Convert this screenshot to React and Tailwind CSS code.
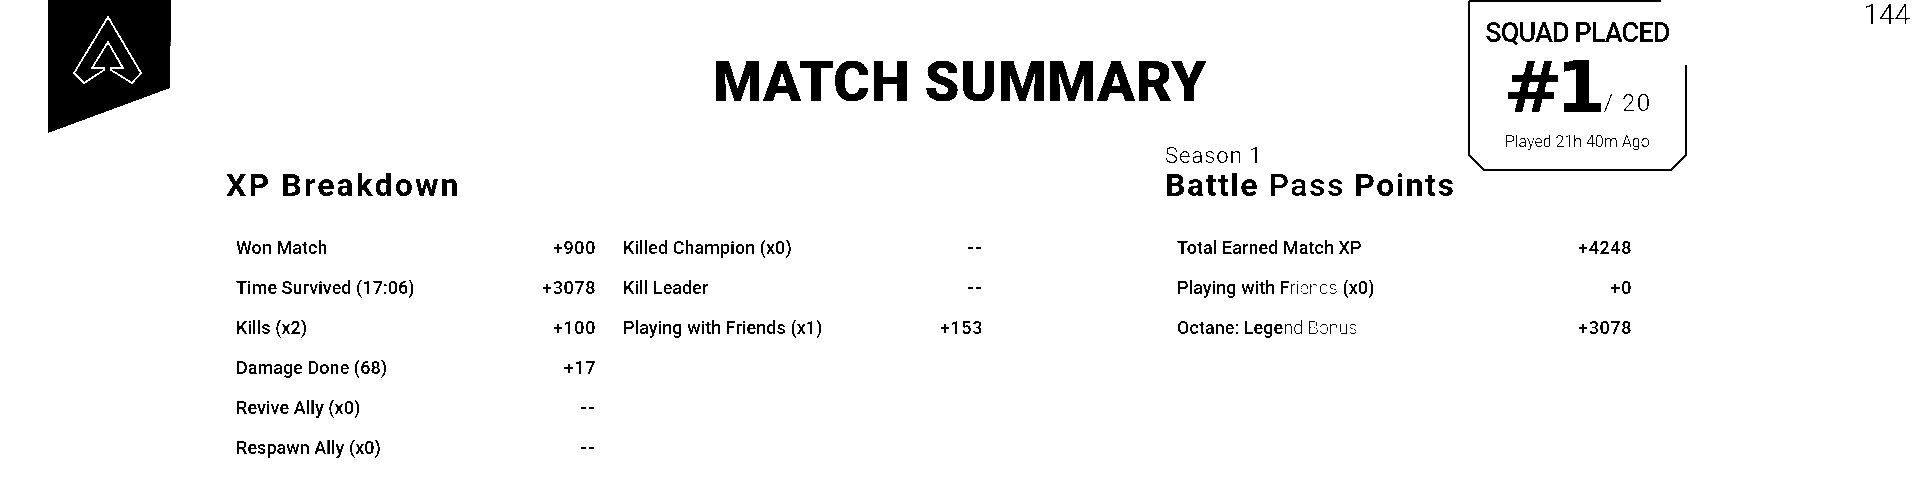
import React from "react";

const leftRows = [
  ["Won Match", "+900"],
  ["Time Survived (17:06)", "+3078"],
  ["Kills (x2)", "+100"],
  ["Damage Done (68)", "+17"],
  ["Revive Ally (x0)", "--"],
  ["Respawn Ally (x0)", "--"],
];

const midRows = [
  ["Killed Champion (x0)", "--"],
  ["Kill Leader", "--"],
  ["Playing with Friends (x1)", "+153"],
];

const Row = ({ label, value }) => (
  <div className="flex items-center justify-between h-[40px] text-[18px] font-medium tracking-[0.05px]">
    <span className="whitespace-nowrap">{label}</span>
    <span className={value === "--" ? "tracking-[1px] font-bold" : "tracking-[0.6px]"}>{value}</span>
  </div>
);

const Logo = () => (
  <svg width="123" height="133" viewBox="48 0 123 133" className="block">
    <polygon points="48,0 171,0 170,88 48,133" fill="#000" />
    <polygon
      points="108,17 141,73 132,83 111,70 111,68 123,68 108,42 92,68 104,68 104,70 84,83 74,73"
      fill="none"
      stroke="#fff"
      strokeWidth="1.8"
    />
  </svg>
);

const PlacedBox = () => (
  <div className="relative w-[219px] h-[172px] shrink-0 text-center">
    <svg width="219" height="172" viewBox="0 0 219 172" className="absolute left-0 top-0">
      <path d="M1 1H193M1 1V155L16 170H203L218 155V65" fill="none" stroke="#000" strokeWidth="2" />
    </svg>
    <div className="pt-[17px] text-[27px] leading-[32px] font-medium tracking-[-0.9px]">SQUAD PLACED</div>
    <div className="flex items-end justify-center h-[73px]">
      <span className="font-['DejaVu_Sans'] font-bold text-[72px] leading-[70px] tracking-[-8px]">#1</span>
      <span className="text-[24px] leading-[24px] font-light tracking-[1.5px] ml-[6px] mb-[7px]">/ 20</span>
    </div>
    <div className="mt-[10px] text-[16px] leading-[20px] font-light">Played 21h 40m Ago</div>
  </div>
);

export default function App() {
  return (
    <div className="relative w-full h-[486px] bg-white text-black overflow-hidden font-['Roboto',sans-serif] contrast-[100]">
      {/* top row */}
      <div className="grid grid-cols-[1fr_auto_1fr] h-[133px]">
        <div className="pl-[48px]">
          <Logo />
        </div>
        <h1 className="pt-[51px] text-[56px] leading-[62px] font-black tracking-[0.4px] whitespace-nowrap">
          MATCH SUMMARY
        </h1>
        <div className="flex justify-between pl-[261px] pr-[10px]">
          <PlacedBox />
          <span className="text-[28px] leading-[30px] font-light">144</span>
        </div>
      </div>

      <div className="flex pl-[226px]">
        {/* xp breakdown */}
        <div className="w-[939px] shrink-0">
          <div className="h-[94px] flex flex-col justify-end pb-[26px]">
            <h2 className="text-[32px] leading-[32px] font-bold tracking-[2.1px]">XP Breakdown</h2>
          </div>
          <div className="flex gap-[27px] pl-[10px]">
            <div className="w-[360px]">
              {leftRows.map(([l, v]) => (
                <Row key={l} label={l} value={v} />
              ))}
            </div>
            <div className="w-[360px]">
              {midRows.map(([l, v]) => (
                <Row key={l} label={l} value={v} />
              ))}
            </div>
          </div>
        </div>

        {/* battle pass */}
        <div className="w-[480px] shrink-0">
          <div className="h-[94px] flex flex-col justify-end pb-[26px]">
            <div className="text-[22px] leading-[26px] font-light tracking-[1px]">Season 1</div>
            <h2 className="text-[32px] leading-[32px] font-bold tracking-[1.5px] whitespace-nowrap">
              Battle <span className="font-medium">Pass</span> Points
            </h2>
          </div>
          <div className="pl-[12px] w-[467px]">
            <Row label="Total Earned Match XP" value="+4248" />
            <Row
              label={
                <>
                  Playing with F<span className="font-extralight">riends</span> (x0)
                </>
              }
              value="+0"
            />
            <Row
              label={
                <>
                  Octane: Lege<span className="font-light">nd</span> <span className="font-extralight">Bonus</span>
                </>
              }
              value="+3078"
            />
          </div>
        </div>
      </div>
    </div>
  );
}
